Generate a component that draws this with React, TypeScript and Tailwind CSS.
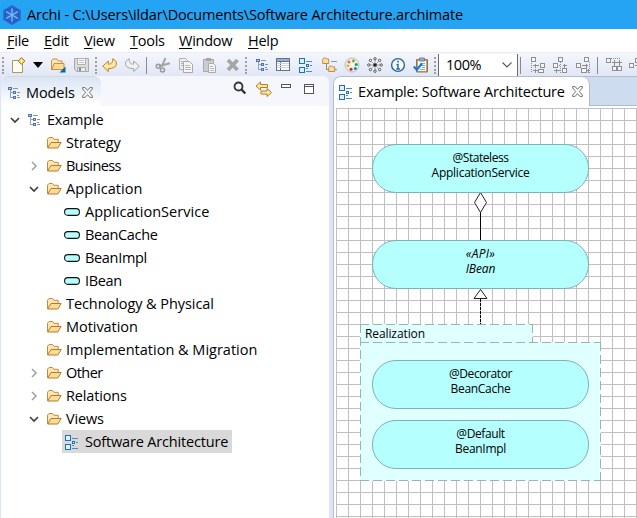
import type { ReactNode } from "react";

type Part = { className?: string };

function Icon({ className = "", w = 16, children }: { className?: string; w?: number; children: ReactNode }) {
  return (
    <svg className={"shrink-0 " + className} width={w} height={16} viewBox={`0 0 ${w} 16`} fill="none">
      {children}
    </svg>
  );
}

/* ---------- shared icons ---------- */

function ModelIcon({ className }: Part) {
  return (
    <Icon className={className}>
      <g shapeRendering="crispEdges">
        <path d="M3.5 5v8M4 7.5h2M4 12.5h2" stroke="#8ea3c8" />
        <path d="M1.5 2.5h3v2h-3zM6.5 6.5h2v2h-2zM6.5 11.5h2v2h-2z" stroke="#5472ab" fill="#b9cbe8" />
        <path d="M6 3.5h5M10 7.5h3M10 12.5h3M10 10.5h2" stroke="#8593ad" />
      </g>
    </Icon>
  );
}

function ViewIcon({ className }: Part) {
  return (
    <Icon className={className}>
      <g shapeRendering="crispEdges">
        <path d="M1.5 1.5h5v5h-5zM1.5 10.5h5v5h-5z" stroke="#1f72b0" fill="#dff0fc" />
        <path d="M8 4.5h6M8 11.5h2M8 14.5h6M12 8.5h2" stroke="#4f8cbb" />
        <path d="M8.5 7.5h2v2h-2z" stroke="#1f72b0" fill="#fff" />
      </g>
    </Icon>
  );
}

function FolderIcon({ className }: Part) {
  return (
    <Icon className={className}>
      <path d="M1.5 12.5V4.2L3 2.5h3.5L8 4.3h4.2V7" fill="#fbe6b4" stroke="#c48a3a" />
      <path d="M1.6 13L5 7.5h10.2L11.8 13z" fill="#fbdc94" stroke="#b9782b" strokeLinejoin="round" />
    </Icon>
  );
}

function ElementIcon({ className }: Part) {
  return (
    <Icon className={className}>
      <rect x=".6" y="4.6" width="14.8" height="6.8" rx="3.2" fill="#b5ffff" stroke="#111" strokeWidth="1.1" />
    </Icon>
  );
}

function CloseMark({ className = "" }: Part) {
  return (
    <svg className={"shrink-0 " + className} width="11" height="11" viewBox="0 0 11 11" fill="#fff">
      <path
        d="M.6.6h2.5l2.4 2.8L7.9.6h2.5v1.3L7.3 5.5l3.1 3.6v1.3H7.9L5.5 7.6l-2.4 2.8H.6V9.1l3.1-3.6L.6 1.9z"
        stroke="#5f5f5f"
        strokeWidth=".9"
      />
    </svg>
  );
}

/* ---------- toolbar ---------- */

function Grip({ className = "" }: Part) {
  return (
    <svg className={"shrink-0 " + className} width="2" height="18" shapeRendering="crispEdges">
      {[1, 5, 9, 13, 16].map((y) => (
        <rect key={y} y={y} width="2" height="2" fill="#a39f98" />
      ))}
    </svg>
  );
}

function Divider({ className = "" }: Part) {
  return <div className={"h-[17px] w-px shrink-0 bg-[#8a8a8a] " + className} />;
}

function Undo({ className, flip }: Part & { flip?: boolean }) {
  return (
    <Icon className={className}>
      <path
        transform={flip ? "matrix(-1 0 0 1 16 0)" : undefined}
        d="M.8 9.2L6.300 4v3.200c3 0 4.700-1.400 4.400-5.400 2.600 1 4.400 3.600 3.700 6-.8 2.500-3.600 3.800-8.100 3.800v3z"
        fill={flip ? "#f1f1f1" : "#fde9a8"}
        stroke={flip ? "#a5a5a5" : "#bd8320"}
        strokeLinejoin="round"
      />
    </Icon>
  );
}

function AlignIcon({ className, kind }: Part & { kind: number }) {
  const shapes = [
    "M1.500 .5h4v4h-4zM10.500 6.500h4v4h-4zM8.500 12.500h5v3h-5z",
    "M6.500 .5h4v4h-4zM1.500 6.500h4v4h-4zM10.500 11.500h4v4h-4z",
    "M9.500 .5h4v4h-4zM1.500 6.500h4v4h-4zM6.500 11.500h5v4h-5z",
    "M.5 1.500h4v4h-4zM6.500 9.500h4v4h-4zM11.500 9.500h4v4h-4z",
    "M.5 6.500h4v4h-4zM6.500 1.500h4v4h-4z",
  ];
  const arrows = [
    "M3 8.500h6M5 6.500v4M3 13.500h5M5 11.500v4",
    "M7 8.500h1M11 8.500h4M12 6.500v4M2 13.500h7M4 11.500v4",
    "M7 8.500h6M11 6.500v4M12 13.500h2M13 11.500v4",
    "M8.500 3v6M6 5.500h5M13.500 3v6M11 5.500h5",
    "M6 8.500h2",
  ];
  const guides = ["M1.500 6v10", "M8.500 5v11", "M14.500 5v11", "M5 1.500h10", "M4 8.500h10"];
  return (
    <Icon className={className}>
      <g stroke="#8f8f8f" shapeRendering="crispEdges">
        <path d={arrows[kind]} />
        <path d={guides[kind]} strokeDasharray="1 1" />
        <path d={shapes[kind]} fill="#f5f6fb" />
      </g>
    </Icon>
  );
}

function Toolbar() {
  return (
    <div className="flex h-6 shrink-0 items-center overflow-hidden bg-gradient-to-b from-[#f4f6fc] to-[#e0e6f5] pl-[2px]">
      <Grip />
      <Icon className="ml-[7px]">
        <path d="M1.500 3.500h7l3 3v9h-10z" fill="#fffef4" stroke="#aa985e" />
        <path d="M10.500 .6l3.400 3.400-3.400 3.400L7.100 4z" fill="#f3c95b" stroke="#ad7c24" />
        <path d="M10.500 2v4M8.500 4h4" stroke="#fff5c6" />
      </Icon>
      <svg className="ml-[6px] shrink-0" width="10" height="6"><path d="M0 0h10L5 6z" fill="#000" /></svg>
      <Icon className="ml-[7px]">
        <path d="M1.500 12.500v-9l1.500-1.500h4l1.500 2h3.500v8.500z" fill="#fbe6b4" stroke="#c98f43" />
        <path d="M2 12.500l2-6h10v6z" fill="#fbdc94" stroke="#c98f43" />
        <path d="M15.500 9.500v6H9.500z" fill="#08679e" />
      </Icon>
      <Icon className="ml-2">
        <path d="M.5 1.500h14v13h-12l-2-2z" fill="#dcdcdc" stroke="#a9a9a9" />
        <path d="M3.500 1.500h8v6h-8z" fill="#f7f7f7" stroke="#b1b1b1" />
        <path d="M5 3.500h5M5 5.500h5" stroke="#c5c5c5" />
        <path d="M3.500 10.500h8v4h-8z" fill="#eee" stroke="#a9a9a9" />
        <path d="M5 11h2v3H5z" fill="#888" />
      </Icon>
      <Grip className="ml-[5px]" />
      <Undo className="ml-[5px]" />
      <Undo className="ml-[6px]" flip />
      <Divider className="ml-[6px]" />
      <Icon className="ml-2">
        <path d="M10.500 1L6.800 9.500M15 6.200L4 9.200" stroke="#a4a4a4" strokeWidth="2" />
        <circle cx="3.300" cy="9.300" r="2" stroke="#999" strokeWidth="1.500" />
        <circle cx="7.500" cy="13" r="2" stroke="#999" strokeWidth="1.500" />
      </Icon>
      <Icon className="ml-[7px]">
        <path d="M1.500 1.500h6l2 2v9h-8z" fill="#eee" stroke="#b0b0b0" />
        <path d="M5.500 4.500h6l3 3v8h-9z" fill="#f6f6f6" stroke="#a8a8a8" />
        <path d="M7 8.500h5M7 10.500h6M7 12.500h6M3 4.500h2M3 6.500h2M3 8.500h2" stroke="#b5b5b5" />
      </Icon>
      <Icon className="ml-2">
        <path d="M1.500 2.500h10v12h-10z" fill="#ccc" stroke="#a8a8a8" />
        <path d="M4 1h5v3H4z" fill="#a6a6a6" />
        <path d="M6.500 6.500h5l2 2v7h-7z" fill="#f5f5f5" stroke="#aaa" />
        <path d="M8 9.500h3M8 11.500h4M8 13.500h4" stroke="#bbb" />
      </Icon>
      <Icon className="ml-[7px]">
        <path d="M3 3l9.500 10M12.500 3L3 13" stroke="#a6a6a6" strokeWidth="3.800" />
      </Icon>
      <Grip className="ml-1" />
      <ModelIcon className="ml-2" />
      <Icon className="ml-1">
        <g shapeRendering="crispEdges">
          <path d="M1.500 1.500h13v12h-13z" fill="#fff" stroke="#64718a" />
          <path d="M2 2h12v2H2z" fill="#9bb0d0" />
          <path d="M2 4.500h12M5.500 4v9" stroke="#64718a" />
          <path d="M2 6.500h12M2 8.500h12M2 10.500h12" stroke="#cdd5e2" />
        </g>
      </Icon>
      <ViewIcon className="ml-[7px]" />
      <Icon className="ml-2">
        <path d="M4.500 7v5.500h3" stroke="#888" />
        <path d="M.7 6.500v-4l1-1.500h2l1 1h2v4.500zM6.700 14.500v-4l1-1.500h2l1 1h2v4.500z" fill="#fbe09e" stroke="#c28c42" />
        <path d="M9 4.500h6M13 12.500h2" stroke="#7f9cc5" />
      </Icon>
      <Icon className="ml-[6px]">
        <circle cx="8" cy="8" r="7" fill="#eceef0" stroke="#babec4" />
        <circle cx="5" cy="5" r="1.500" fill="#eb7c13" />
        <circle cx="9.500" cy="4" r="1.400" fill="#8c9c16" />
        <circle cx="12.300" cy="7.500" r="1.500" fill="#20a532" />
        <circle cx="3.800" cy="8.800" r="1.400" fill="#e7b414" />
        <circle cx="7" cy="12.200" r="1.500" fill="#d42028" />
        <circle cx="11.300" cy="11.500" r="1.500" fill="#2879c8" />
        <circle cx="8" cy="8" r="1.200" fill="#fff" />
      </Icon>
      <Icon className="ml-[7px]">
        <path d="M8 3v10M3 8h10M4.500 4.500l7 7M11.500 4.500l-7 7" stroke="#888" strokeWidth=".7" />
        <circle cx="8" cy="8" r="1.800" fill="#222" />
        {[[8, 1.8], [12.600, 3.400], [14.200, 8], [12.600, 12.600], [8, 14.200], [3.400, 12.600], [1.800, 8], [3.400, 3.400]].map(([x, y]) => (
          <circle key={`${x}-${y}`} cx={x} cy={y} r="1.200" fill="#fff" stroke="#444" strokeWidth=".9" />
        ))}
      </Icon>
      <Icon className="ml-[7px]">
        <circle cx="8" cy="8" r="6.400" fill="#fff" stroke="#22679b" strokeWidth="1.400" />
        <path d="M8 3.500v2M6.500 7.500h1.500v4M6.300 12h3.700M8 7v5" stroke="#1c6cac" strokeWidth="1.500" />
      </Icon>
      <Icon className="ml-[7px]">
        <path d="M3.500 2.500h11v12.500h-11z" fill="#c4a36f" stroke="#95754a" />
        <path d="M5 4h8v10H5z" fill="#f5f8fd" />
        <path d="M6.500 1h5v3h-5z" fill="#9aa8c2" stroke="#7384a4" />
        <path d="M7 6.500h5M7 8.500h5M9 10.500h3M7 12.500h5" stroke="#8ca7d0" />
        <path d="M.8 9.500l3 3.300L9 6.500" stroke="#147bd8" strokeWidth="2.200" />
      </Icon>
      <Grip className="ml-[5px]" />
      <div className="ml-[2px] flex h-[23px] w-20 shrink-0 items-center border-x border-[#6c6c6c] bg-white pr-[5px] pl-[7px]">
        <span className="grow text-[14.500px] tracking-[-0.45px]">100%</span>
        <svg width="10" height="6" fill="none"><path d="M.5 .5L5 5 9.500 .5" stroke="#555" strokeWidth="1.100" /></svg>
      </div>
      <Divider className="ml-[2px]" />
      <AlignIcon className="ml-[9px]" kind={0} />
      <AlignIcon className="ml-[6px]" kind={1} />
      <AlignIcon className="ml-[7px]" kind={2} />
      <Divider className="ml-[6px]" />
      <AlignIcon className="ml-2" kind={3} />
      <AlignIcon className="ml-[7px]" kind={4} />
    </div>
  );
}

/* ---------- model tree ---------- */

type Row = { label: string; depth: 0 | 1 | 2; icon: "model" | "folder" | "element" | "view"; open?: boolean; track: string };

const rows: Row[] = [
  { label: "Example", depth: 0, icon: "model", open: true, track: "tracking-[-0.2px]" },
  { label: "Strategy", depth: 1, icon: "folder", track: "tracking-[-0.1px]" },
  { label: "Business", depth: 1, icon: "folder", open: false, track: "tracking-[-0.6px]" },
  { label: "Application", depth: 1, icon: "folder", open: true, track: "tracking-[0.08px]" },
  { label: "ApplicationService", depth: 2, icon: "element", track: "tracking-[0.04px]" },
  { label: "BeanCache", depth: 2, icon: "element", track: "tracking-[-0.35px]" },
  { label: "BeanImpl", depth: 2, icon: "element", track: "tracking-[-0.32px]" },
  { label: "IBean", depth: 2, icon: "element", track: "tracking-[-0.35px]" },
  { label: "Technology & Physical", depth: 1, icon: "folder", track: "tracking-[-0.07px]" },
  { label: "Motivation", depth: 1, icon: "folder", track: "tracking-[-0.05px]" },
  { label: "Implementation & Migration", depth: 1, icon: "folder", track: "tracking-[0px]" },
  { label: "Other", depth: 1, icon: "folder", open: false, track: "tracking-[-0.55px]" },
  { label: "Relations", depth: 1, icon: "folder", open: false, track: "tracking-[-0.15px]" },
  { label: "Views", depth: 1, icon: "folder", open: true, track: "tracking-[-0.15px]" },
  { label: "Software Architecture", depth: 2, icon: "view", track: "tracking-[-0.17px]" },
];

const indents = { 0: "pl-[9px]", 1: "pl-[28px]", 2: "pl-[46px]" };
const rowIcons = { model: ModelIcon, folder: FolderIcon, element: ElementIcon, view: ViewIcon };

function Twisty({ open }: { open?: boolean }) {
  return (
    <svg className="shrink-0" width="10" height="10" fill="none">
      {open === true && <path d="M1 3l4 4 4-4" stroke="#404040" strokeWidth="1.700" />}
      {open === false && <path d="M3 1l4 4-4 4" stroke="#a0a0a0" strokeWidth="1.500" />}
    </svg>
  );
}

function Tree() {
  return (
    <div className="grow bg-white pt-[2px]">
      {rows.map((row) => {
        const RowIcon = rowIcons[row.icon];
        const selected = row.icon === "view";
        return (
          <div key={row.label} className={"flex h-[23px] items-center " + indents[row.depth]}>
            <Twisty open={row.open} />
            <div className={"flex h-full items-center pr-1 " + (row.depth === 2 ? "ml-[5px] pl-[2px] " : "ml-[7px] ") + (selected ? "bg-[#d9d9d9]" : "")}>
              <RowIcon />
              <span className={"whitespace-nowrap " + (row.depth === 2 ? "ml-[5px] " : "ml-1 ") + row.track}>{row.label}</span>
            </div>
          </div>
        );
      })}
    </div>
  );
}

function ModelsPanel() {
  return (
    <section className="ml-px flex w-[328px] shrink-0 flex-col overflow-hidden rounded-t-md bg-[#f5f7fc]">
      <div className="flex h-[30px] shrink-0">
        <div className="flex w-[100px] items-center rounded-t-lg border-t border-[#d2d9e6] bg-gradient-to-b from-[#dae5f3] to-white pt-[2px] pl-[6px]">
          <ModelIcon />
          <span className="ml-[3px] w-[50px] tracking-[-0.1px]">Models</span>
          <CloseMark className="ml-[6px]" />
        </div>
        <div className="flex grow items-start justify-end pt-[5px] pr-[15px]">
          <Icon>
            <circle cx="5.500" cy="5.500" r="4" stroke="#333" strokeWidth="1.800" />
            <path d="M8.500 8.500l3.800 4" stroke="#333" strokeWidth="2.500" />
          </Icon>
          <Icon className="ml-[6px]" w={17}>
            <path d="M1 5l4.500-4v2.500h7v3h-7V9z" fill="#fde9ac" stroke="#bd7b1d" />
            <path d="M16.500 11.500L12 7.500V10H6v3h6v2.500z" fill="#fde9ac" stroke="#bd7b1d" />
          </Icon>
          <svg className="mt-[3px] ml-[9px]" width="10" height="4" shapeRendering="crispEdges"><path d="M.5 .5h9v3h-9z" fill="#fff" stroke="#555" /></svg>
          <svg className="mt-[3px] ml-[13px]" width="10" height="10" shapeRendering="crispEdges"><path d="M.5 .5h9v9h-9zM0 2.500h10" fill="#fff" stroke="#555" /></svg>
        </div>
      </div>
      <Tree />
    </section>
  );
}

/* ---------- diagram ---------- */

type Line = { text: string; track: string };
type Box = { lines: Line[]; y: string; italic?: boolean };

const boxes: Box[] = [
  {
    y: "top-9",
    lines: [
      { text: "@Stateless", track: "tracking-[-0.45px]" },
      { text: "ApplicationService", track: "tracking-[-0.25px]" },
    ],
  },
  {
    y: "top-[132px]",
    italic: true,
    lines: [
      { text: "«API»", track: "tracking-[0.3px]" },
      { text: "IBean", track: "tracking-[-0.1px]" },
    ],
  },
  {
    y: "top-[252px]",
    lines: [
      { text: "@Decorator", track: "tracking-[-0.4px]" },
      { text: "BeanCache", track: "tracking-[-0.3px]" },
    ],
  },
  {
    y: "top-[312px]",
    lines: [
      { text: "@Default", track: "tracking-[-0.4px]" },
      { text: "BeanImpl", track: "tracking-[-0.3px]" },
    ],
  },
];

function Diagram() {
  return (
    <div className="relative ml-[2px] grow overflow-hidden bg-white bg-[linear-gradient(to_right,#c0c0c0_1px,transparent_1px),linear-gradient(to_bottom,#c0c0c0_1px,transparent_1px)] bg-[size:12px_12px] text-[12px] leading-[15px]">
      <svg className="absolute top-0 left-0" width="301" height="410" fill="none">
        <path d="M24 216h173v18h68v139H24z" fill="#e0ffff" />
        <g stroke="#9db3b3" strokeDasharray="9 4" shapeRendering="crispEdges">
          <path d="M24 216.500h173M24.500 216v157M196.500 216v18M24 234.500h241M264.500 234v139M24 372.500h241" />
        </g>
        <path d="M144.500 103v29" stroke="#000" shapeRendering="crispEdges" />
        <path d="M144.500 84.500l6 10-6 10-6-10z" fill="#fff" stroke="#222" />
        <path d="M144.500 191v25" stroke="#000" strokeDasharray="3 1" shapeRendering="crispEdges" />
        <path d="M144.500 181.500l6.500 9h-13z" fill="#fff" stroke="#222" />
      </svg>
      <span className="absolute top-[218px] left-[29px] tracking-[-0.1px]">Realization</span>
      {boxes.map((box) => (
        <div
          key={box.y}
          className={
            "absolute left-9 flex h-[49px] w-[217px] flex-col items-center rounded-[24px] border border-[#7fb2b2] bg-[#b5ffff] pt-[5px] " +
            box.y + (box.italic ? " italic" : "")
          }
        >
          {box.lines.map((line) => <div key={line.text} className={line.track}>{line.text}</div>)}
        </div>
      ))}
    </div>
  );
}

function EditorPanel() {
  return (
    <section className="ml-1 flex min-w-0 grow flex-col overflow-hidden rounded-tl-lg border-t border-l border-[#b7bccb] bg-white">
      <div className="flex h-[29px] shrink-0 bg-[#cddcee]">
        <div className="flex grow items-center rounded-tr-lg border-r border-[#b3b9cc] bg-white pl-1">
          <ViewIcon />
          <span className="ml-1 w-[208px] whitespace-nowrap tracking-[-0.18px]">Example: Software Architecture</span>
          <CloseMark className="ml-[6px]" />
        </div>
        <div className="w-[47px] shrink-0 border-b border-[#b3b9cc]" />
      </div>
      <div className="h-[2px] shrink-0" />
      <Diagram />
    </section>
  );
}

/* ---------- window ---------- */

const menus = [
  { name: "File", w: "w-[37px]" },
  { name: "Edit", w: "w-10" },
  { name: "View", w: "w-[46px]" },
  { name: "Tools", w: "w-[49px]" },
  { name: "Window", w: "w-[69px]" },
  { name: "Help", w: "w-[40px]" },
];

export default function App() {
  return (
    <div className="flex h-[518px] w-[637px] flex-col overflow-hidden bg-[#dfe5f7] font-['Open_Sans','Noto_Sans',sans-serif] text-[14.500px] leading-5 text-black">
      <header className="flex h-[29px] shrink-0 items-center bg-[#26a4f4] pl-[3px]">
        <svg className="shrink-0" width="18" height="20" viewBox="0 0 18 20">
          <path d="M9 0l8.700 5v10L9 20 .3 15V5z" fill="#2a66cf" />
          <path d="M9 10V2.500M9 10l6.500-3.700M9 10l6.500 3.700M9 10v7.500M9 10l-6.500 3.700M9 10L2.500 6.300" stroke="#7cc0f6" strokeWidth="1.300" />
          <path d="M9 2.500l6.500 3.700v7.500L9 17.500l-6.500-3.800V6.200z" fill="none" stroke="#1c4fb4" strokeWidth=".8" />
        </svg>
        <span className="ml-[6px] whitespace-nowrap tracking-[-0.16px]">Archi - C:\Users\ildar\Documents\Software Architecture.archimate</span>
      </header>
      <nav className="flex h-[23px] shrink-0 items-end bg-white pb-[1px] pl-[7px] tracking-[-0.25px]">
        {menus.map((m) => (
          <span key={m.name} className={m.w}>
            <span className="underline decoration-1 underline-offset-2">{m.name[0]}</span>
            {m.name.slice(1)}
          </span>
        ))}
      </nav>
      <div className="h-px shrink-0 bg-[#eeeeee]" />
      <Toolbar />
      <main className="-mt-px flex min-h-0 grow">
        <ModelsPanel />
        <EditorPanel />
      </main>
    </div>
  );
}
